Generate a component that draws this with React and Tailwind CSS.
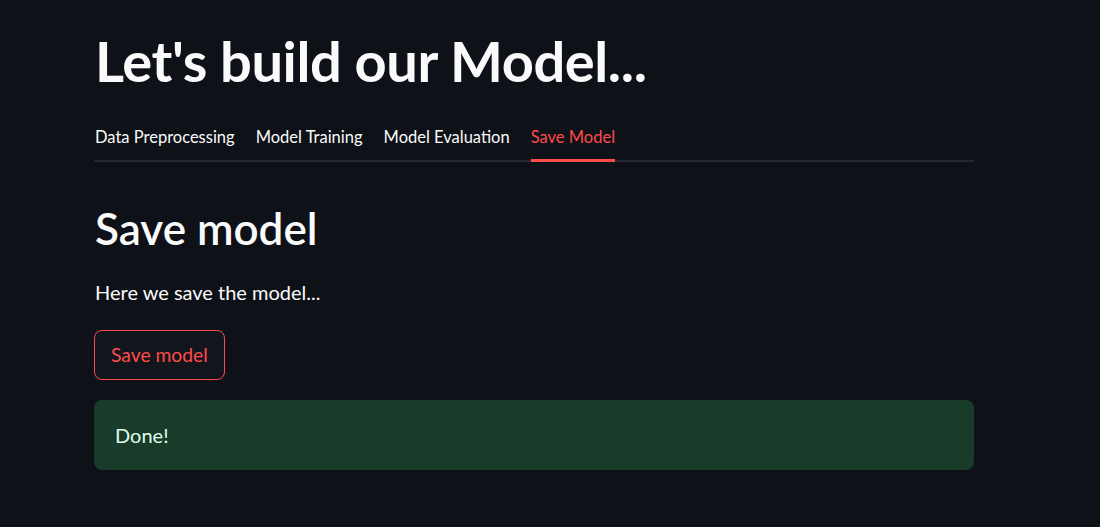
export default function App() {
  const tabs = ["Data Preprocessing", "Model Training", "Model Evaluation", "Save Model"];
  const active = 3;

  return (
    <div
      className="min-h-[527px] w-full bg-[#0e1117] text-[#fafafa]"
      style={{ fontFamily: "Lato, 'Noto Sans', sans-serif" }}
    >
      <div className="ml-[94px] w-[880px] pt-[29px]">
        <h1 className="pl-px text-[56px] font-bold leading-[64px] tracking-[-0.4px]">Let's build our Model...</h1>

        <div className="mt-[32px] flex gap-[21px] border-b-2 border-[#26282e] pl-px">
          {tabs.map((t, i) => (
            <div
              key={t}
              className={
                i === active
                  ? "-mb-[2px] border-b-[3px] border-[#ff4b4b] pb-[8px] text-[16.5px] leading-6 text-[#ff4b4b]"
                  : "pb-[11px] text-[16.5px] leading-6 text-[#fafafa]"
              }
            >
              {t}
            </div>
          ))}
        </div>

        <h2 className="mt-[38px] pl-px text-[44px] font-semibold leading-[56px]">Save model</h2>

        <p className="mt-[20px] pl-px text-[20px] leading-8">Here we save the model...</p>

        <button className="mt-[22px] h-[50px] rounded-lg border border-[#ff4b4b] bg-[#12151c] px-4 text-[19.3px] text-[#ff4b4b]">
          Save model
        </button>

        <div className="mt-[20px] flex h-[70px] items-center rounded-lg bg-[#193c2a] px-[21px] text-[20px] text-[#dffde9]">
          Done!
        </div>
      </div>
    </div>
  );
}
